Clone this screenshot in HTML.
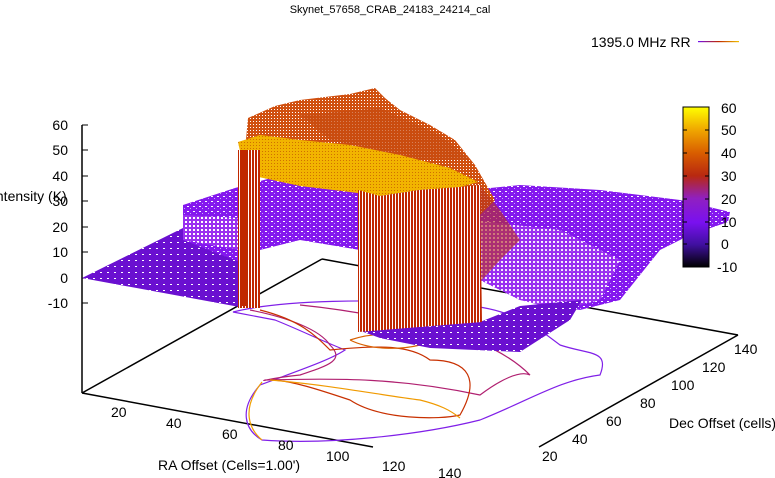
<!DOCTYPE html>
<html><head><meta charset="utf-8"><style>
html,body{margin:0;padding:0;background:#fff;}
svg{display:block;font-family:"Liberation Sans",sans-serif;font-size:14px;}
</style></head><body>
<svg width="775" height="478" viewBox="0 0 775 478" xmlns="http://www.w3.org/2000/svg">
<defs>
<pattern id="pd" width="7" height="6" patternUnits="userSpaceOnUse">
<rect width="7" height="6" fill="#6a10d0"/><rect x="2" y="2" width="2" height="1" fill="#fff"/></pattern>
<pattern id="pv" width="6" height="5" patternUnits="userSpaceOnUse">
<rect width="6" height="5" fill="#8418ee"/><rect x="1" y="1" width="2" height="1" fill="#fff"/><rect x="4" y="3" width="1" height="1" fill="#c8a0ff"/></pattern>
<pattern id="pr" width="3" height="10" patternUnits="userSpaceOnUse">
<rect width="3" height="10" fill="#fff"/><rect width="2" height="10" fill="#c02800"/></pattern>
<pattern id="py" width="3" height="3" patternUnits="userSpaceOnUse">
<rect width="3" height="3" fill="#f2b400"/><rect x="1" y="1" width="1" height="1" fill="#d07000"/></pattern>
<pattern id="po" width="3" height="3" patternUnits="userSpaceOnUse">
<rect width="3" height="3" fill="#d05010"/><rect x="1" y="1" width="1" height="1" fill="#fff"/></pattern>
<pattern id="pw" width="4" height="4" patternUnits="userSpaceOnUse">
<rect width="4" height="4" fill="#9a30f0"/><rect x="1" y="1" width="2" height="2" fill="#fff"/></pattern>
<linearGradient id="cb" x1="0" y1="1" x2="0" y2="0">
<stop offset="0" stop-color="#000"/><stop offset="0.14" stop-color="#4010a0"/><stop offset="0.28" stop-color="#7a10f0"/><stop offset="0.43" stop-color="#9020c0"/><stop offset="0.57" stop-color="#b82810"/><stop offset="0.71" stop-color="#d85c00"/><stop offset="0.86" stop-color="#f0a800"/><stop offset="1" stop-color="#ffff00"/></linearGradient>
<linearGradient id="lg" x1="0" x2="1"><stop offset="0" stop-color="#7010f0"/><stop offset="0.5" stop-color="#c02800"/><stop offset="1" stop-color="#f0c000"/></linearGradient>
</defs>

<text x="390" y="13" text-anchor="middle" font-size="11">Skynet_57658_CRAB_24183_24214_cal</text>
<text x="591" y="47">1395.0 MHz RR</text>
<rect x="698" y="41" width="41" height="1.2" fill="url(#lg)"/>

<!-- base axes -->
<g stroke="#000" stroke-width="1.5" fill="none">
<line x1="82" y1="125" x2="82" y2="393"/>
<line x1="82" y1="393" x2="373" y2="447"/>
<line x1="82" y1="393" x2="322" y2="259"/>
<line x1="322" y1="259" x2="738" y2="335"/>
<line x1="539" y1="447" x2="738" y2="335"/>
</g>
<g stroke="#000" stroke-width="1">
<line x1="82" y1="125" x2="88" y2="125"/><line x1="82" y1="150" x2="88" y2="150"/><line x1="82" y1="176" x2="88" y2="176"/><line x1="82" y1="201" x2="88" y2="201"/><line x1="82" y1="227" x2="88" y2="227"/><line x1="82" y1="252" x2="88" y2="252"/><line x1="82" y1="278" x2="88" y2="278"/><line x1="82" y1="303" x2="88" y2="303"/>
</g>
<g text-anchor="end">
<text x="68" y="130">60</text><text x="68" y="155">50</text><text x="68" y="181">40</text><text x="68" y="206">30</text><text x="68" y="232">20</text><text x="68" y="257">10</text><text x="68" y="283">0</text><text x="68" y="308">-10</text>
</g>
<text x="-8" y="201">Intensity (K)</text>

<!-- contours on base -->
<g fill="none" stroke-width="1.2">
<path d="M233,312 C280,300 380,298 450,305 C500,305 520,320 540,330 L560,345 C590,355 610,350 600,375 C560,380 530,400 480,420 C420,435 330,445 262,440 C245,430 238,410 260,385 C300,370 330,360 345,350 C320,340 300,330 275,320 Z" stroke="#8020e8"/>
<path d="M250,310 C290,318 320,330 330,345 C345,360 330,365 300,375 C270,378 260,382 265,380 C340,378 400,378 480,395 C500,380 520,370 530,375 C510,355 480,340 440,330 C400,320 350,310 300,305" stroke="#b02070"/>
<path d="M260,310 C300,320 315,335 330,350 C380,345 410,345 430,360 C470,360 480,380 460,415 C440,420 380,420 350,400 C320,390 290,380 270,380" stroke="#c83000"/>
<path d="M270,380 C330,385 380,395 420,400 C440,405 450,410 460,418" stroke="#f09a00"/>
<path d="M350,340 C380,330 400,335 420,345 C400,350 370,350 350,340" stroke="#d86000"/>
<path d="M262,440 C250,430 240,410 262,382" stroke="#f0a000"/>
</g>

<!-- left flat sheet -->
<polygon points="82,278 183,228 240,262 245,308" fill="url(#pd)"/>
<!-- raised left block -->
<polygon points="183,205 235,188 240,190 240,262 183,240" fill="url(#pv)"/>
<polygon points="183,215 240,218 240,250 183,240" fill="url(#pw)"/>
<!-- big purple back plateau -->
<polygon points="235,188 300,170 420,180 470,190 520,185 600,190 640,195 680,200 730,212 728,222 690,235 660,250 620,300 580,310 520,300 480,280 360,250 300,240 260,250 240,250" fill="url(#pv)"/>
<polygon points="470,220 560,230 620,260 600,300 560,310 520,300 480,280 470,250" fill="url(#pw)" opacity="0.9"/>
<!-- bottom front purple sheet -->
<polygon points="358,330 480,322 520,306 582,300 570,320 520,352 430,348 380,338" fill="url(#pd)"/>
<!-- orange back top -->
<polygon points="248,118 275,106 300,100 350,94 375,88 385,98 400,110 430,125 455,140 475,165 495,200 480,215 460,200 440,190 350,175 260,160 245,150" fill="url(#po)"/>
<polygon points="300,115 380,108 440,135 470,160 420,160 330,140" fill="#c84a10" opacity="0.7"/>
<!-- yellow band -->
<polygon points="238,142 260,135 300,140 350,145 400,155 450,168 478,182 460,187 420,190 380,196 350,192 300,186 245,174" fill="url(#py)"/>
<!-- red curtains -->
<rect x="238" y="150" width="22" height="158" fill="url(#pr)"/>
<rect x="240" y="150" width="6" height="156" fill="#c02800"/>
<polygon points="358,190 380,196 420,190 460,187 480,185 482,322 358,332" fill="url(#pr)"/>
<polygon points="480,185 500,210 520,240 500,260 482,280" fill="#b83020" opacity="0.6"/>

<!-- colorbox -->
<rect x="683" y="107" width="26" height="160" fill="url(#cb)" stroke="#000" stroke-width="1"/>
<g stroke="#000"><line x1="683" y1="130" x2="687" y2="130"/><line x1="705" y1="130" x2="709" y2="130"/><line x1="683" y1="153" x2="687" y2="153"/><line x1="705" y1="153" x2="709" y2="153"/><line x1="683" y1="176" x2="687" y2="176"/><line x1="705" y1="176" x2="709" y2="176"/><line x1="683" y1="199" x2="687" y2="199"/><line x1="705" y1="199" x2="709" y2="199"/><line x1="683" y1="222" x2="687" y2="222"/><line x1="705" y1="222" x2="709" y2="222"/><line x1="683" y1="244" x2="687" y2="244"/><line x1="705" y1="244" x2="709" y2="244"/></g>
<g><text x="721" y="113">60</text><text x="721" y="135">50</text><text x="721" y="158">40</text><text x="721" y="181">30</text><text x="721" y="204">20</text><text x="721" y="227">10</text><text x="721" y="249">0</text><text x="717" y="272">-10</text></g>

<!-- axis labels -->
<text x="111" y="417">20</text><text x="166" y="428">40</text><text x="222" y="439">60</text><text x="278" y="450">80</text><text x="326" y="461">100</text><text x="382" y="471">120</text><text x="438" y="478">140</text>
<text x="158" y="470">RA Offset (Cells=1.00')</text>
<text x="542" y="461">20</text><text x="572" y="444">40</text><text x="606" y="426">60</text><text x="640" y="408">80</text><text x="671" y="390">100</text><text x="702" y="372">120</text><text x="734" y="354">140</text>
<text x="669" y="428">Dec Offset (cells)</text>
</svg>
</body></html>
